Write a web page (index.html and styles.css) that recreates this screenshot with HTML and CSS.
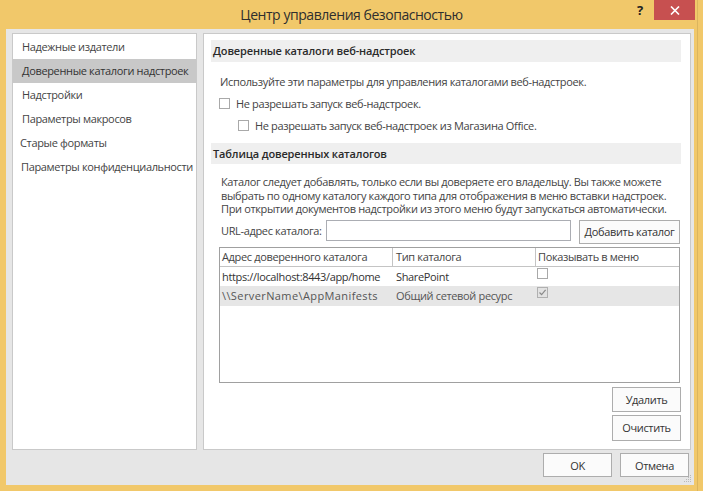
FILE: index.html
```html
<!DOCTYPE html>
<html lang="ru">
<head>
<meta charset="utf-8">
<title>Центр управления безопасностью</title>
<link rel="stylesheet" href="styles.css">
</head>
<body>
<div class="window">
  <div class="titlebar">
    <div class="title">Центр управления безопасностью</div>
    <div class="controls">
      <span class="help">?</span>
      <span class="close"><svg width="10" height="9" viewBox="0 0 10 9"><path d="M1 0.5 L9 8.5 M9 0.5 L1 8.5" stroke="#ffffff" stroke-width="1.6" fill="none"/></svg></span>
    </div>
  </div>
  <div class="frame">
    <div class="main">
      <ul class="nav">
        <li>Надежные издатели</li>
        <li class="selected">Доверенные каталоги надстроек</li>
        <li>Надстройки</li>
        <li>Параметры макросов</li>
        <li class="shift">Старые форматы</li>
        <li class="shift1">Параметры конфиденциальности</li>
      </ul>
      <div class="content">
        <div class="section-head">Доверенные каталоги веб-надстроек</div>
        <p class="intro">Используйте эти параметры для управления каталогами веб-надстроек.</p>
        <div class="check"><span class="box"></span>Не разрешать запуск веб-надстроек.</div>
        <div class="check sub"><span class="box"></span>Не разрешать запуск веб-надстроек из Магазина Office.</div>
        <div class="section-head second">Таблица доверенных каталогов</div>
        <p class="desc">Каталог следует добавлять, только если вы доверяете его владельцу. Вы также можете<br>выбрать по одному каталогу каждого типа для отображения в меню вставки надстроек.<br>При открытии документов надстройки из этого меню будут запускаться автоматически.</p>
        <div class="url-row">
          <span class="url-label">URL-адрес каталога:</span>
          <span class="input"></span>
          <button class="btn add">Добавить каталог</button>
        </div>
        <div class="table">
          <div class="row head">
            <div class="cell">Адрес доверенного каталога</div>
            <div class="cell">Тип каталога</div>
            <div class="cell">Показывать в меню</div>
          </div>
          <div class="row">
            <div class="cell">https://localhost:8443/app/home</div>
            <div class="cell">SharePoint</div>
            <div class="cell cbcell"><span class="box"></span></div>
          </div>
          <div class="row alt">
            <div class="cell share">\\ServerName\AppManifests</div>
            <div class="cell">Общий сетевой ресурс</div>
            <div class="cell cbcell"><span class="box checked"><svg width="9" height="9" viewBox="0 0 9 9"><path d="M1.5 4.5 L3.6 6.6 L7.6 1.8" stroke="#8a8a8a" stroke-width="1.2" fill="none"/></svg></span></div>
          </div>
        </div>
        <div class="side-buttons">
          <button class="btn del">Удалить</button>
          <button class="btn clr">Очистить</button>
        </div>
      </div>
    </div>
    <div class="footer">
      <button class="btn foot">OK</button>
      <button class="btn foot">Отмена</button>
    </div>
    <svg class="grip" width="8" height="8" viewBox="0 0 8 8"><g fill="#b9b9b9"><rect x="6" y="0" width="1" height="1"/><rect x="4" y="2" width="1" height="1"/><rect x="6" y="2" width="1" height="1"/><rect x="2" y="4" width="1" height="1"/><rect x="4" y="4" width="1" height="1"/><rect x="6" y="4" width="1" height="1"/><rect x="0" y="6" width="1" height="1"/><rect x="2" y="6" width="1" height="1"/><rect x="4" y="6" width="1" height="1"/><rect x="6" y="6" width="1" height="1"/></g></svg>
  </div>
</div>
</body>
</html>
```

FILE: styles.css
```css
* { box-sizing: border-box; }
html, body { margin: 0; padding: 0; }
body {
  width: 703px;
  height: 491px;
  overflow: hidden;
  background: #f1c86a;
  font-family: "Open Sans", "Noto Sans", sans-serif;
  font-size: 11px;
  letter-spacing: -0.35px;
  color: #444444;
}
.window {
  width: 698px;
  height: 491px;
  display: flex;
  flex-direction: column;
  background: #f1c86a;
  border-right: 1px solid #dbb55e;
}
.titlebar {
  height: 29px;
  flex: none;
  position: relative;
  display: flex;
  justify-content: center;
}
.title {
  font-size: 14px;
  letter-spacing: -0.45px;
  line-height: 30px;
  color: #2e2e2e;
  padding-left: 6px;
}
.controls {
  position: absolute;
  right: 2px;
  top: 0;
  display: flex;
  align-items: flex-start;
}
.help {
  width: 17px;
  font-size: 13px;
  font-weight: bold;
  line-height: 20px;
  color: #222;
  text-align: left;
}
.close {
  width: 41px;
  height: 20px;
  background: #c75050;
  display: flex;
  align-items: center;
  justify-content: center;
}
.frame {
  flex: 1;
  margin: 0 3px 6px 6px;
  background: #e6e6e6;
  padding: 4px 3px 0 6px;
  position: relative;
  display: flex;
  flex-direction: column;
}
.main {
  height: 417px;
  display: flex;
  gap: 6px;
}
.nav {
  width: 185px;
  flex: none;
  margin: 0;
  padding: 1px 0 0 0;
  list-style: none;
  background: #ffffff;
  border: 1px solid #c9c9c9;
}
.nav li {
  height: 24px;
  line-height: 24px;
  padding-left: 9px;
  white-space: nowrap;
  overflow: hidden;
}
.nav li.selected {
  background: #c8c8c8;
  color: #333333;
}
.nav li.shift { padding-left: 7px; }
.nav li.shift1 { padding-left: 8px; }
.content {
  flex: 1;
  min-width: 0;
  background: #ffffff;
  border: 1px solid #c9c9c9;
  padding: 6px 9px 0 7px;
  display: flex;
  flex-direction: column;
}
.section-head {
  height: 22px;
  line-height: 22px;
  padding-left: 2px;
  background: #efefef;
  color: #2a2a2a;
  font-weight: 600;
  letter-spacing: -0.15px;
}
.section-head.second {
  margin-top: 11px;
  height: 21px;
  line-height: 21px;
}
.intro {
  margin: 13px 0 0 0;
  padding-left: 9px;
  line-height: 14px;
}
.check {
  display: flex;
  align-items: center;
  height: 14px;
  margin-top: 7px;
  padding-left: 8px;
}
.check.sub {
  margin-top: 8px;
  padding-left: 27px;
}
.box {
  width: 11px;
  height: 11px;
  flex: none;
  border: 1px solid #a9a9a9;
  background: #ffffff;
  margin-right: 6px;
  display: flex;
  align-items: center;
  justify-content: center;
}
.box.checked {
  background: #e2e2e2;
  border-color: #b0b0b0;
}
.desc {
  margin: 11px 0 0 0;
  padding-left: 10px;
  line-height: 13.5px;
  white-space: nowrap;
}
.url-row {
  margin-top: 4px;
  display: flex;
  align-items: flex-start;
  padding-left: 10px;
  height: 24px;
}
.url-label {
  width: 105px;
  line-height: 21px;
  flex: none;
  white-space: nowrap;
}
.input {
  width: 245px;
  height: 21px;
  border: 1px solid #abadb3;
  background: #ffffff;
  margin-right: 8px;
  flex: none;
}
.btn {
  font-family: inherit;
  font-size: 11px;
  letter-spacing: -0.35px;
  color: #333333;
  background: #fbfbfb;
  border: 1px solid #adadad;
  padding: 0;
  margin: 0;
  white-space: nowrap;
}
.btn.add {
  width: 101px;
  height: 24px;
  flex: none;
}
.table {
  margin: 3px 1px 0 8px;
  height: 136px;
  border: 1px solid #a0a0a0;
  background: #ffffff;
}
.row {
  display: grid;
  grid-template-columns: 173px 143px 1fr;
  height: 19px;
}
.row.alt {
  height: 20px;
  background: #e6e6e6;
}
.row.head .cell {
  border-right: 1px solid #c4c4c4;
  border-bottom: 1px solid #c4c4c4;
  line-height: 18px;
  color: #444;
}
.row.head .cell:last-child { border-right: none; }
.cell {
  padding-left: 2px;
  line-height: 19px;
  white-space: nowrap;
  overflow: hidden;
  color: #333;
}
.row.alt .cell { line-height: 20px; color: #555; }
.cell.share { letter-spacing: 0.4px; }
.cell:nth-child(2) { padding-left: 3px; }
.cbcell {
  padding-left: 1px;
  padding-top: 1px;
}
.side-buttons {
  margin-top: 4px;
  display: flex;
  flex-direction: column;
  align-items: flex-end;
  gap: 3px;
}
.btn.del { width: 69px; height: 25px; }
.btn.clr { width: 69px; height: 26px; }
.footer {
  margin-top: 3px;
  display: flex;
  justify-content: flex-end;
  gap: 8px;
  padding-right: 2px;
}
.btn.foot { width: 69px; height: 24px; }
.grip {
  position: absolute;
  right: 2px;
  bottom: 2px;
}
```
